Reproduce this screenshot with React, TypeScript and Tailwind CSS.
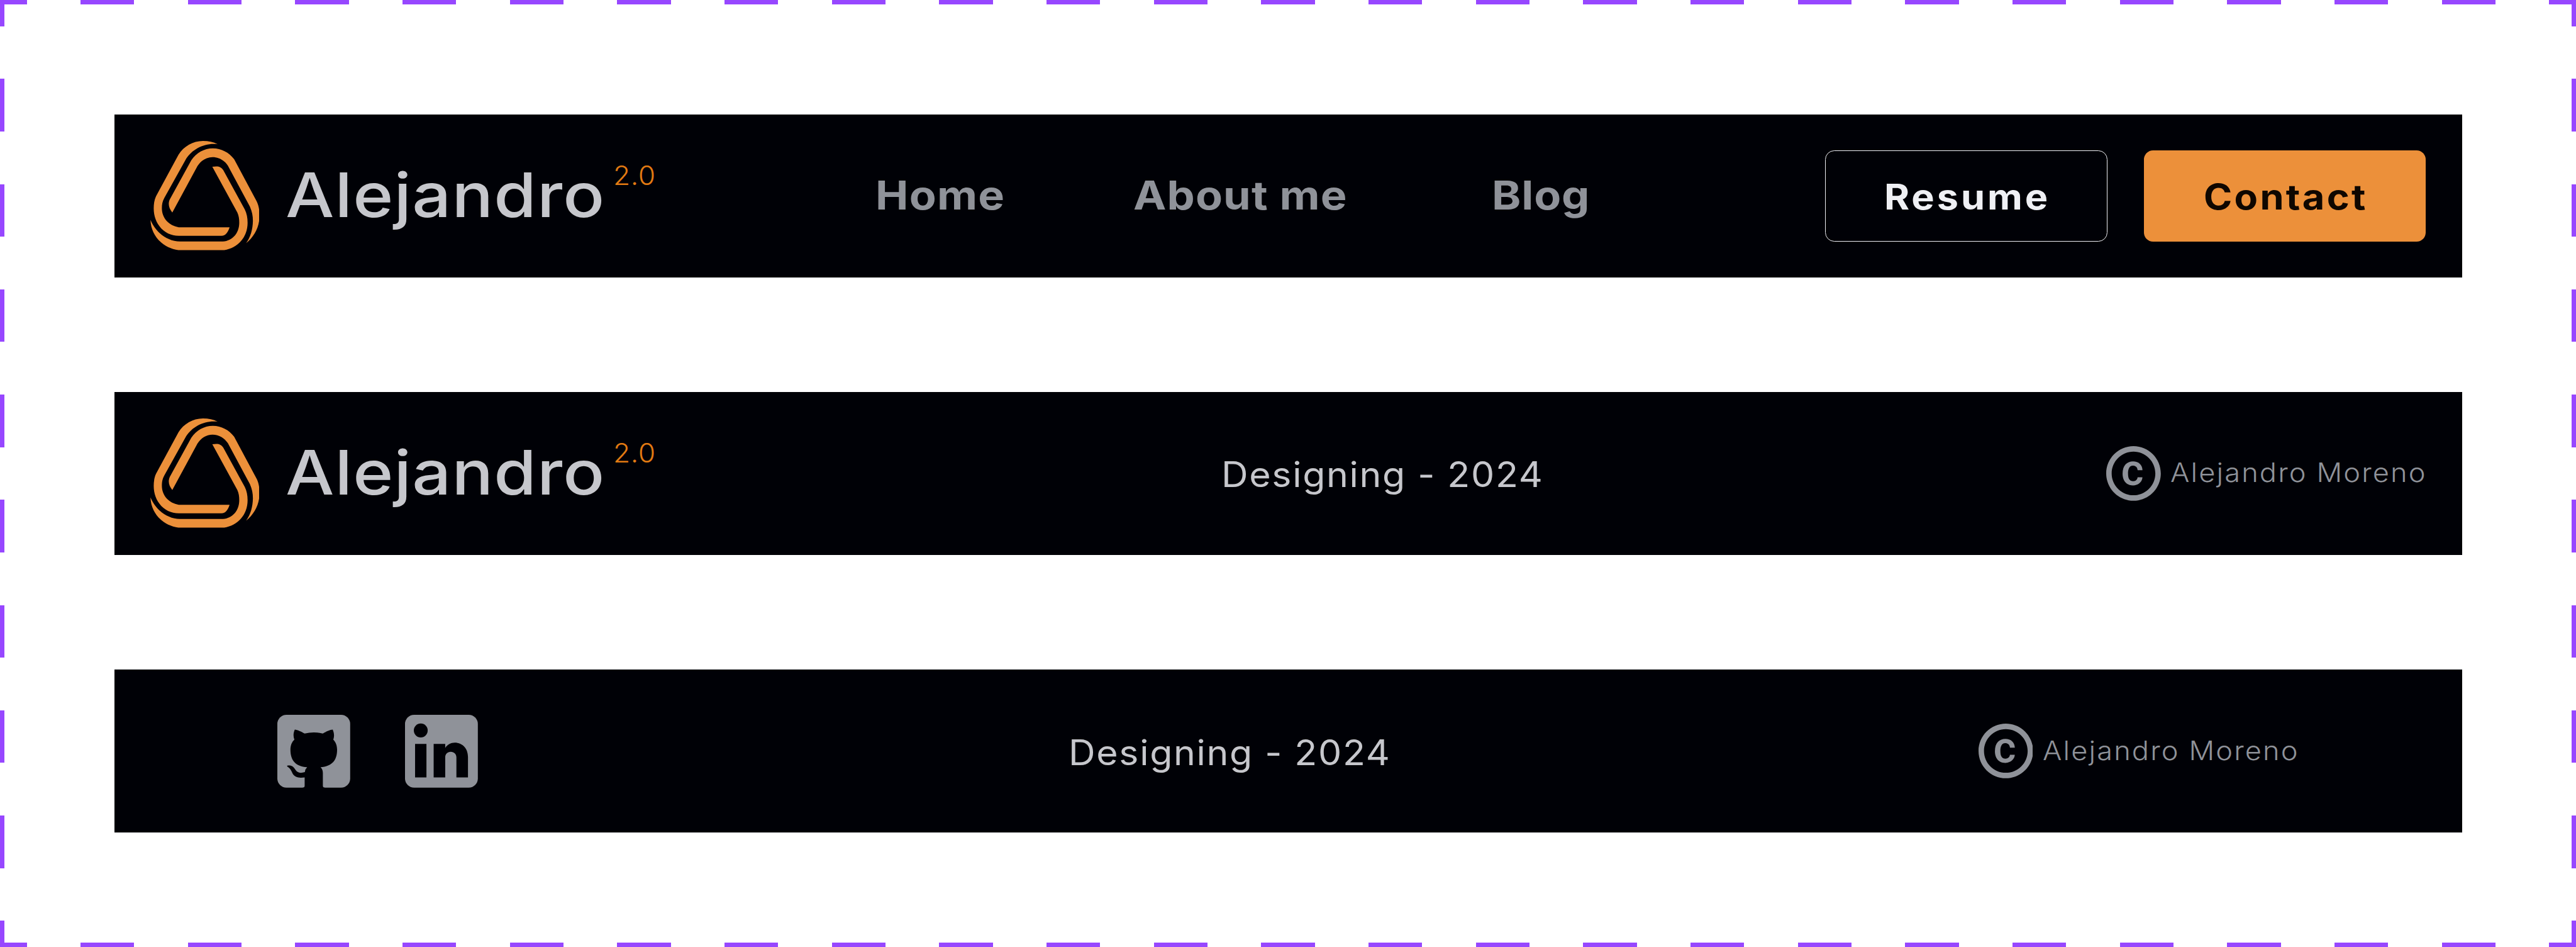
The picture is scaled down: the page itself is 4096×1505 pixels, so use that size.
import React from "react";
import { MdCopyright } from "react-icons/md";

function Logo() {
  return (
    <svg viewBox="222 174 576 576" className="size-[173.7px] shrink-0 fill-[#ec903a]">
      <path d="M577 191C555 179 529 174 500 174C446 174 398 203 371 246L252 466C243 485 240 508 240 530C240 612 297 674 372 674H597C620 674 632 654 640 629H372C322 620 283 583 283 528C283 508 286 492 296 474L411 268C445 216 508 183 577 191Z" />
      <path d="M338 551L471 306C490 277 517 259 550 259C585 259 613 277 631 304L747 520C759 547 763 570 763 595C762 640 751 680 727 713C772 676 798 625 798 566C798 538 793 512 783 492L664 270C637 235 597 213 552 213C505 213 465 237 438 276L325 482C314 505 320 530 338 551Z" />
      <path d="M549 310C580 305 594 309 607 328L720 535C731 557 735 580 735 605C735 680 684 739 612 749H370C290 738 225 675 223 590C250 655 310 703 378 704H605C655 700 691 660 691 605C691 585 689 569 681 551Z" />
    </svg>
  );
}

function Brand() {
  return (
    <div className="flex shrink-0 items-center">
      <Logo />
      <div className="ml-[42.8px] w-[503.1px] pb-[1px]">
        <span className="-ml-[1.6px] block origin-left scale-x-112 text-[97.5px] font-medium leading-none tracking-[1.05px] text-[#c6c7cc]">
          Alejandro
        </span>
      </div>
      <div className="ml-[19.4px] w-[62.1px] pb-[62px]">
        <span className="-ml-[2.6px] block origin-left scale-x-106 text-[41.8px] font-light leading-none tracking-[0.6px] text-[#e27a12]">
          2.0
        </span>
      </div>
    </div>
  );
}

function Tagline() {
  return (
    <div className="w-[503.8px] shrink-0 pt-[3.6px]">
      <span className="-ml-[5.4px] block origin-left scale-x-106 text-[55.7px] leading-none tracking-[1.58px] text-[#c6c7cc]">
        Designing - 2024
      </span>
    </div>
  );
}

function Copyright() {
  return (
    <div className="ml-auto flex shrink-0 items-center gap-[16.6px]">
      <MdCopyright viewBox="2 2 20 20" className="size-[86.8px] text-[#8f9299]" />
      <div className="w-[404.5px]">
        <span className="-ml-[1.4px] block origin-left scale-x-108 text-[41.8px] font-light leading-none tracking-[1.98px] text-[#8f9299]">
          Alejandro Moreno
        </span>
      </div>
    </div>
  );
}

function Github() {
  return (
    <svg viewBox="84 78 384 384" className="size-[115.8px] shrink-0">
      <rect x="84" y="78" width="384" height="384" rx="48" className="fill-[#8f9299]" />
      <path
        className="fill-[#000106]"
        d="M176 156C190 157 210 167 228 177Q276 165 324 177C342 166 362 156 376 156C384 175 385 192 379 209C392 222 399 240 399 262C399 320 370 350 312 354C320 362 324 372 324 384V452Q324 462 334 462V463H218V462Q228 462 228 452V408C200 412 175 410 163 385C158 370 148 356 138 352Q132 346 140 345C160 343 170 352 178 366C190 385 205 387 229 380Q231 363 241 354C180 350 153 318 153 262C153 240 160 221 174 209C167 192 168 175 176 156Z"
      />
    </svg>
  );
}

function Linkedin() {
  return (
    <svg viewBox="756 78 384 384" className="size-[115.8px] shrink-0">
      <rect x="756" y="78" width="384" height="384" rx="48" className="fill-[#8f9299]" />
      <g className="fill-[#000106]">
        <circle cx="839" cy="160.500" r="36.500" />
        <path d="M809 231H869V408H809Z" />
        <path d="M907 231H968V253C978 236 998 225 1018 225C1060 225 1088 257 1088 300V408H1027V303C1027 285 1014 273 997 273C980 273 968 285 968 303V408H907Z" />
      </g>
    </svg>
  );
}

function DashedFrame() {
  return (
    <div className="pointer-events-none absolute inset-0">
      <div className="absolute inset-x-0 top-0 h-[7.2px] bg-[repeating-linear-gradient(90deg,#9747ff_0_42.67px,transparent_42.67px_128px,#9747ff_128px_170.667px)]" />
      <div className="absolute inset-x-0 bottom-0 h-[7.2px] bg-[repeating-linear-gradient(90deg,#9747ff_0_42.67px,transparent_42.67px_128px,#9747ff_128px_170.667px)]" />
      <div className="absolute inset-y-0 left-0 w-[7.2px] bg-[repeating-linear-gradient(180deg,#9747ff_0_41.8px,transparent_41.8px_125.4px,#9747ff_125.4px_167.222px)]" />
      <div className="absolute inset-y-0 right-0 w-[7.2px] bg-[repeating-linear-gradient(180deg,#9747ff_0_41.8px,transparent_41.8px_125.4px,#9747ff_125.4px_167.222px)]" />
    </div>
  );
}

export default function App() {
  return (
    <main className="relative flex h-[1505px] w-[4096px] flex-col gap-[181.7px] overflow-hidden whitespace-nowrap bg-white px-[181.5px] pt-[181.7px] font-['Inter',sans-serif]">
      <header className="flex h-[259.3px] shrink-0 items-center bg-[#000106] px-[57.3px]">
        <Brand />
        <nav className="ml-[356.4px] flex pb-[2.6px] text-[62.7px] font-bold leading-none text-[#8f9299]">
          <a className="w-[198.6px]">
            <span className="-ml-[4.2px] block origin-left scale-x-112 tracking-[1.1px]">Home</span>
          </a>
          <a className="ml-[208px] w-[337px]">
            <span className="-ml-[1px] block origin-left scale-x-112 tracking-[1px]">About me</span>
          </a>
          <a className="ml-[236.6px] w-[146.9px]">
            <span className="-ml-[4.5px] block origin-left scale-x-112 tracking-[0.75px]">Blog</span>
          </a>
        </nav>
        <div className="ml-auto flex gap-[58px] text-[55.7px] font-bold leading-none">
          <button className="flex h-[144.7px] w-[448.6px] items-center rounded-[14.5px] border border-[#eff0f4] pl-[96.7px] pt-[3px] text-[#eff0f4]">
            <span className="-ml-[3.8px] block origin-left scale-x-110 tracking-[3.53px]">Resume</span>
          </button>
          <button className="flex h-[144.7px] w-[448.6px] items-center rounded-[14.5px] bg-[#ec903a] pl-[97.8px] pt-[3px] text-[#0f0700]">
            <span className="-ml-[2.4px] block origin-left scale-x-110 tracking-[2.97px]">Contact</span>
          </button>
        </div>
      </header>

      <footer className="flex h-[259.3px] shrink-0 items-center bg-[#000106] px-[57.3px]">
        <Brand />
        <div className="ml-[907.3px]">
          <Tagline />
        </div>
        <Copyright />
      </footer>

      <footer className="flex h-[259.3px] shrink-0 items-center bg-[#000106] pl-[259.9px] pr-[261px] pt-[1px]">
        <div className="flex gap-[86.9px]">
          <Github />
          <Linkedin />
        </div>
        <div className="ml-[944.8px]">
          <Tagline />
        </div>
        <Copyright />
      </footer>

      <DashedFrame />
    </main>
  );
}
